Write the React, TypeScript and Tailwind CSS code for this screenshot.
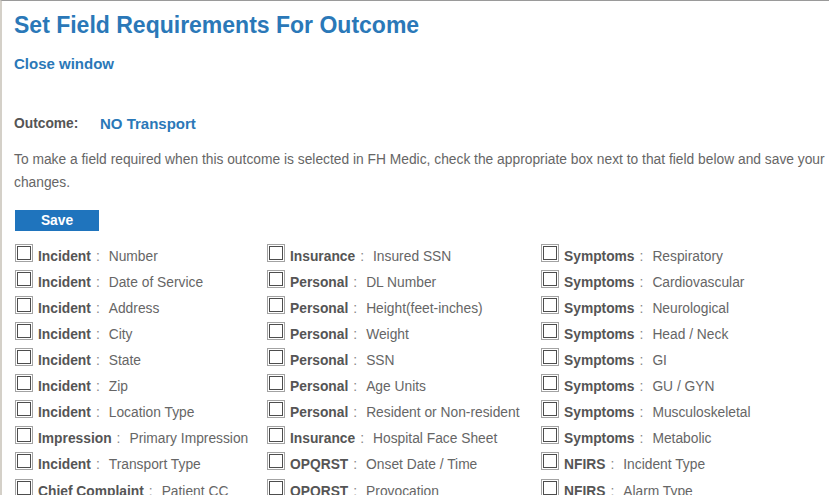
import React from "react";

type Field = { group: string; name: string };

const columns: Field[][] = [
  [
    { group: "Incident", name: "Number" },
    { group: "Incident", name: "Date of Service" },
    { group: "Incident", name: "Address" },
    { group: "Incident", name: "City" },
    { group: "Incident", name: "State" },
    { group: "Incident", name: "Zip" },
    { group: "Incident", name: "Location Type" },
    { group: "Impression", name: "Primary Impression" },
    { group: "Incident", name: "Transport Type" },
    { group: "Chief Complaint", name: "Patient CC" },
  ],
  [
    { group: "Insurance", name: "Insured SSN" },
    { group: "Personal", name: "DL Number" },
    { group: "Personal", name: "Height(feet-inches)" },
    { group: "Personal", name: "Weight" },
    { group: "Personal", name: "SSN" },
    { group: "Personal", name: "Age Units" },
    { group: "Personal", name: "Resident or Non-resident" },
    { group: "Insurance", name: "Hospital Face Sheet" },
    { group: "OPQRST", name: "Onset Date / Time" },
    { group: "OPQRST", name: "Provocation" },
  ],
  [
    { group: "Symptoms", name: "Respiratory" },
    { group: "Symptoms", name: "Cardiovascular" },
    { group: "Symptoms", name: "Neurological" },
    { group: "Symptoms", name: "Head / Neck" },
    { group: "Symptoms", name: "GI" },
    { group: "Symptoms", name: "GU / GYN" },
    { group: "Symptoms", name: "Musculoskeletal" },
    { group: "Symptoms", name: "Metabolic" },
    { group: "NFIRS", name: "Incident Type" },
    { group: "NFIRS", name: "Alarm Type" },
  ],
];

function Box() {
  return (
    <span className="block w-[18px] h-[18px] flex-shrink-0 border border-[#a3a3a3] bg-white p-[1px]">
      <span className="block w-full h-full border border-[#4d4d4d] bg-white" />
    </span>
  );
}

function FieldRow({ f }: { f: Field }) {
  return (
    <label className="flex items-start h-[26.1px] cursor-pointer">
      <Box />
      <span className="ml-[5px] mt-[3px] leading-[20px] whitespace-nowrap">
        <b className="font-bold text-[#555]">{f.group}</b>
        <span className="pl-[5px] pr-[9px] text-[#888]">:</span>
        <span className="text-[#666]">{f.name}</span>
      </span>
    </label>
  );
}

export default function App() {
  return (
    <div
      className="h-screen overflow-hidden bg-white border-l-2 border-l-[#d4d0c8] border-t border-t-[#9a9a9a] text-[13.8px]"
      style={{ fontFamily: '"Liberation Sans", Arial, sans-serif' }}
    >
      <div className="pl-[12px]">
        <h1 className="mt-[10px] text-[23px] leading-[28px] font-bold text-[#2a78b8]">
          Set Field Requirements For Outcome
        </h1>
        <a className="block mt-[15px] text-[15px] leading-[20px] font-bold text-[#2a78b8] cursor-pointer">
          Close window
        </a>
        <div className="mt-[40px] flex items-center leading-[20px]">
          <span className="w-[86px] font-bold text-[#555]">Outcome:</span>
          <span className="text-[15px] font-bold text-[#2a78b8]">NO Transport</span>
        </div>
        <p className="mt-[14px] leading-[23px] text-[#666]">
          To make a field required when this outcome is selected in FH Medic, check the appropriate box next to that
          field below and save your changes.
        </p>
        <button className="mt-[16px] ml-[1px] w-[84px] h-[21px] bg-[#1f74bd] text-white font-bold text-[13.8px] leading-[21px]">
          Save
        </button>
        <div className="mt-[12px] ml-[1px] grid grid-cols-[252px_274px_1fr]">
          {columns.map((col, i) => (
            <div key={i} className="flex flex-col">
              {col.map((f) => (
                <FieldRow key={f.group + f.name} f={f} />
              ))}
            </div>
          ))}
        </div>
      </div>
    </div>
  );
}
